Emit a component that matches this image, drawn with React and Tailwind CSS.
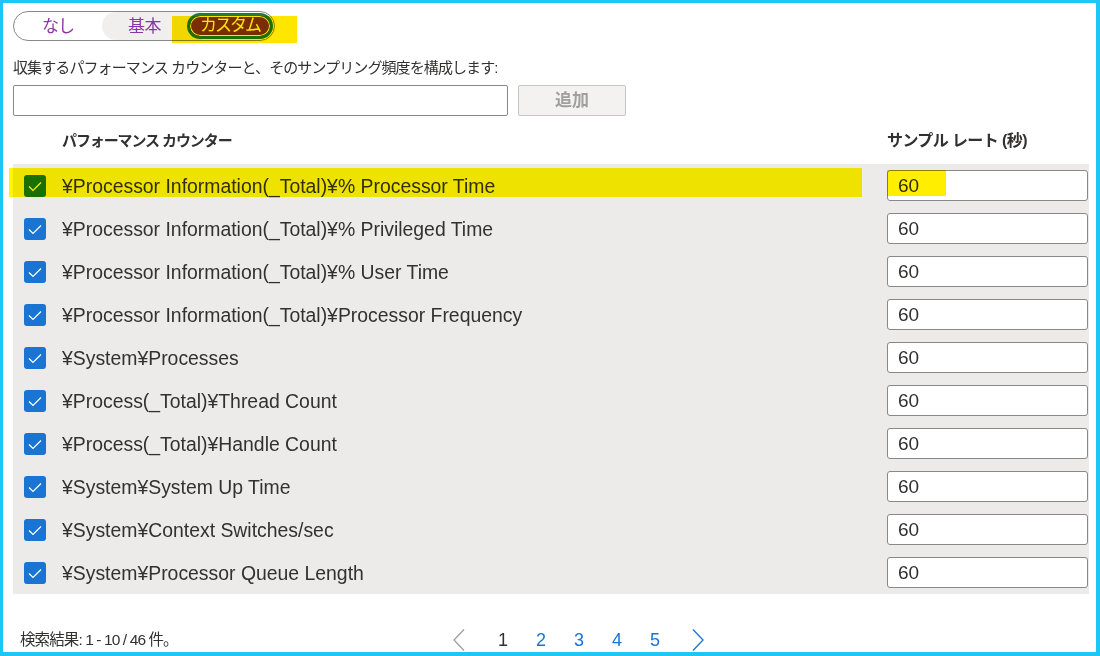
import React from 'react';

const counters = [
  '¥Processor Information(_Total)¥% Processor Time',
  '¥Processor Information(_Total)¥% Privileged Time',
  '¥Processor Information(_Total)¥% User Time',
  '¥Processor Information(_Total)¥Processor Frequency',
  '¥System¥Processes',
  '¥Process(_Total)¥Thread Count',
  '¥Process(_Total)¥Handle Count',
  '¥System¥System Up Time',
  '¥System¥Context Switches/sec',
  '¥System¥Processor Queue Length',
];

const FONT = { fontFamily: '"Liberation Sans", "Noto Sans CJK JP", sans-serif' };

const CheckBox = () => (
  <div className="w-[22px] h-[22px] rounded-[3px] bg-[#1a74d3] flex items-center justify-center shrink-0">
    <svg width="16" height="16" viewBox="0 0 16 16" fill="none">
      <path d="M2 8.5 L6 12.5 L14 4.5" stroke="#ffffff" strokeWidth="1.2" />
    </svg>
  </div>
);

const App = () => {
  return (
    <div
      className="relative w-[1100px] h-[656px] bg-white border-t-[3px] border-l-[3px] border-r-[4px] border-b-[4px] border-[#1cc6f7] overflow-hidden text-[#323130]"
      style={FONT}
    >
      <div className="pl-[10px] pr-[7px] pt-[8px]">
        {/* Mode toggle */}
        <div className="relative flex items-center w-[262px] h-[30px] border border-[#8a8886] rounded-full">
          <span className="w-[88px] pt-[2px] text-center text-[17px] tracking-[-1px] text-[#8b36a6]">なし</span>
          <span className="w-[100px] h-[28px] pt-[2px] flex items-center pl-[26px] rounded-l-full bg-[#f0efee] text-[17px] tracking-[-0.5px] text-[#8b36a6]">
            基本
          </span>
          <span className="-ml-[15px] w-[86px] h-[26px] rounded-full border-[3px] border-[#1d7d3d] bg-[#7a33a8] shadow-[inset_0_0_0_1px_#ffffff] flex items-center justify-center text-[17px] tracking-[-2px] text-white">
            カスタム
          </span>
        </div>

        <div className="mt-[17px] h-[20px] leading-[20px] text-[15px] tracking-[-0.9px]">
          収集するパフォーマンス カウンターと、そのサンプリング頻度を構成します:
        </div>

        <div className="mt-[7px] flex gap-[10px]">
          <div className="w-[495px] h-[31px] border border-[#8a8886] rounded-[2px] bg-white" />
          <div className="w-[108px] h-[31px] border border-[#c8c6c4] rounded-[2px] bg-[#f3f2f1] flex items-center justify-center text-[17px] font-bold text-[#a19f9d]">
            追加
          </div>
        </div>

        {/* Header */}
        <div className="h-[48px] pt-[2px] flex items-center text-[15px] font-bold tracking-[-1.1px]">
          <span className="pl-[49px] flex-1">パフォーマンス カウンター</span>
          <span className="w-[202px] text-[16px] tracking-[-0.6px]">サンプル レート (秒)</span>
        </div>

        {/* Rows */}
        <div className="bg-[#edebe9]">
          {counters.map((name) => (
            <div key={name} className="h-[43px] flex items-center pl-[11px] pr-[1px]">
              <CheckBox />
              <span className="ml-[16px] flex-1 text-[19.4px] pt-[2px] whitespace-nowrap">{name}</span>
              <div className="w-[201px] h-[31px] bg-white border border-[#8a8886] rounded-[3px] flex items-center pl-[10px] pt-[1px] text-[19px]">
                60
              </div>
            </div>
          ))}
        </div>

        {/* Footer */}
        <div className="mt-[33px] flex items-center h-[26px] text-[16px]">
          <span className="w-[434px] pl-[7px] whitespace-nowrap text-[15.5px] tracking-[-0.9px]">検索結果: 1 - 10 / 46 件。</span>
          <span className="w-[24px] flex justify-center">
            <svg width="14" height="24" viewBox="0 0 14 24" fill="none">
              <path d="M12 1.5 L2 12 L12 22.5" stroke="#a19f9d" strokeWidth="1.3" />
            </svg>
          </span>
          <span className="ml-[13px] w-[38px] text-center text-[18px] text-[#323130]">1</span>
          {[2, 3, 4, 5].map((n) => (
            <span key={n} className="w-[38px] text-center text-[18px] text-[#1a74d3]">
              {n}
            </span>
          ))}
          <span className="ml-[12px] w-[24px] flex justify-center">
            <svg width="14" height="24" viewBox="0 0 14 24" fill="none">
              <path d="M2 1.5 L12 12 L2 22.5" stroke="#1a74d3" strokeWidth="1.3" />
            </svg>
          </span>
        </div>
      </div>

      {/* Highlighter marks */}
      <div className="absolute left-[169px] top-[13px] w-[125px] h-[27px] bg-[#ffe600] mix-blend-multiply pointer-events-none" />
      <div className="absolute left-[6px] top-[165px] w-[853px] h-[29px] bg-[#fff600] mix-blend-multiply pointer-events-none" />
      <div className="absolute left-[884px] top-[167px] w-[59px] h-[26px] bg-[#ffee00] mix-blend-multiply pointer-events-none" />
    </div>
  );
};

export default App;
